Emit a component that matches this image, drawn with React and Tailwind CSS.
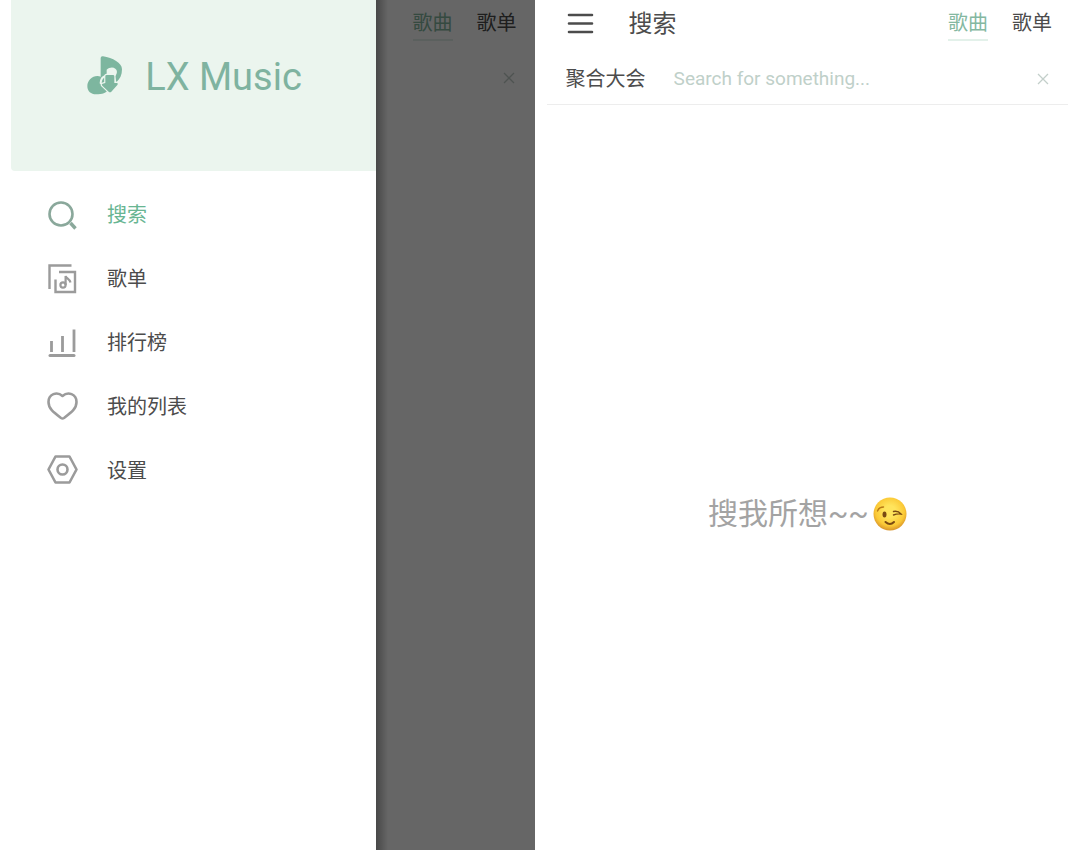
import React from 'react';

function SearchIcon() {
    return (
        <svg className="size-8" viewBox="0 0 32 32" fill="none" stroke="currentColor" strokeWidth="2.600">
            <circle cx="14" cy="15" r="11.500" />
            <path d="M23.500 24 28.500 29.500" strokeWidth="3.400" />
        </svg>
    );
}

function AlbumIcon() {
    return (
        <svg className="size-8" viewBox="0 0 32 32" fill="none" stroke="currentColor" strokeWidth="2.400">
            <path d="M2.500 26V2.500H24.500" />
            <path d="M12 9H28V29H8.500V16.500" />
            <circle cx="16" cy="22" r="2.600" strokeWidth="2.200" />
            <path d="M18.600 22V13C19.500 16 22.500 15.500 23.500 19.500" strokeWidth="2.200" />
        </svg>
    );
}

function RankIcon() {
    return (
        <svg className="size-8" viewBox="0 0 32 32" fill="none" stroke="currentColor" strokeWidth="3" strokeLinecap="round">
            <path d="M4.500 14V25M15.500 9V25M27 2.500V25" strokeLinecap="butt" strokeWidth="2.800" />
            <path d="M3 28.500H27" />
        </svg>
    );
}

function HeartIcon() {
    return (
        <svg className="size-8" viewBox="0 0 32 32" fill="none" stroke="currentColor" strokeWidth="2.600" strokeLinejoin="round">
            <path d="M15.500 5C10 0 1.500 3 1.500 11C1.500 17.500 6 21 14 27Q15.500 28 17 27C25 21 29.500 17.500 29.500 11C29.500 3 21 0 15.500 5Z" />
        </svg>
    );
}

function SettingIcon() {
    return (
        <svg className="size-8" viewBox="0 0 32 32" fill="none" stroke="currentColor" strokeWidth="2.600" strokeLinejoin="round">
            <path d="M8.500 1.500H22.500L29.500 14.500L22.500 27.500H8.500L1.500 14.500Z" />
            <circle cx="15.500" cy="14.500" r="5" />
        </svg>
    );
}

function Logo() {
    return (
        <svg className="h-[39px] w-9" viewBox="22 17 106 117">
            <path
                fill="#7db69f"
                d="M62 23Q62 17 69 18C98 23 126 37 126 57C126 74 120 86 109 96L105 78C112 70 113 60 106 55C98 49 87 52 80 58V80L72 106L84 118C80 127 67 132 48 132C33 132 22 123 22 107C22 91 36 77 52 77Q58 77 62 79Z"
            />
            {/* light gap that keeps the arrow apart from the note */}
            <path
                fill="none"
                stroke="#ebf5ee"
                strokeWidth="6"
                strokeLinecap="round"
                d="M77 77Q63 80 62 98"
            />
            <path
                fill="#7db69f"
                stroke="#ebf5ee"
                strokeWidth="7"
                strokeLinejoin="round"
                paintOrder="stroke"
                d="M80 74H99Q103 74 103 78V98H111Q116 99 112 104L94 124Q90 128 86 124L67 106Q63 101 68 100L76 98V78Q76 74 80 74Z"
            />
        </svg>
    );
}

function WinkFace() {
    return (
        <svg className="size-[34px]" viewBox="0 0 34 34" role="img" aria-label="wink">
            <defs>
                <radialGradient id="face" cx="50%" cy="42%" r="58%">
                    <stop offset="0.3" stopColor="#ffe45c" />
                    <stop offset="0.75" stopColor="#fbc936" />
                    <stop offset="1" stopColor="#d8942a" />
                </radialGradient>
            </defs>
            <circle cx="17" cy="17" r="16.500" fill="url(#face)" />
            <ellipse cx="11.500" cy="17.500" rx="2" ry="3" fill="#7a4a12" />
            <g fill="none" stroke="#7a4a12" strokeLinecap="round">
                <path d="M4.500 14Q6 10 10.500 10" stroke="#b97a17" strokeWidth="1.400" />
                <path d="M20.500 14.500Q25 13.500 28 17Q24 16.500 20.500 18" strokeWidth="1.400" />
                <path d="M12.500 25Q17 29 21 25" strokeWidth="2" />
            </g>
        </svg>
    );
}

const menus = [
    { name: '搜索', Icon: SearchIcon, active: true },
    { name: '歌单', Icon: AlbumIcon },
    { name: '排行榜', Icon: RankIcon },
    { name: '我的列表', Icon: HeartIcon },
    { name: '设置', Icon: SettingIcon },
];

function Tabs() {
    return (
        <nav className="flex gap-6 text-xl leading-8">
            <button type="button" className="border-b-2 border-[#e3f1ea] text-[#84b8a1]">歌曲</button>
            <button type="button" className="border-b-2 border-transparent">歌单</button>
        </nav>
    );
}

function ClearButton() {
    return (
        <button type="button" aria-label="clear" className="text-[#c3cfca]">
            <svg className="size-3" viewBox="0 0 12 12" fill="none" stroke="currentColor" strokeWidth="1.300">
                <path d="M1 1 11 11M11 1 1 11" />
            </svg>
        </button>
    );
}

function DrawerScreen() {
    return (
        <section className="flex pl-[11px]">
            <aside className="w-[365px] shrink-0 bg-white">
                <div className="flex h-[171px] items-start justify-center gap-[22px] rounded-bl-sm bg-[#ebf5ee] pt-[53px] pl-0.5">
                    <div className="pt-[3px]">
                        <Logo />
                    </div>
                    <h1 className="text-[38px] leading-12 text-[#7fb3a0]">LX Music</h1>
                </div>
                <ul className="pt-3">
                    {menus.map(({ name, Icon, active }) => (
                        <li key={name}>
                            <button type="button" className="flex h-16 w-full items-center gap-7 pl-9 text-xl">
                                <span className={active ? 'text-[#8aa89b]' : 'text-[#9b9b9b]'}>
                                    <Icon />
                                </span>
                                <span className={active ? 'text-[#68b592]' : ''}>{name}</span>
                            </button>
                        </li>
                    ))}
                </ul>
            </aside>
            <div className="relative flex-1 overflow-hidden bg-white">
                <header className="flex h-12 items-center justify-end pr-[18px]">
                    <Tabs />
                </header>
                <div className="mt-1 flex h-[52px] items-center justify-end pr-5">
                    <ClearButton />
                </div>
                <div className="absolute inset-0 bg-black/60" />
                <div className="absolute inset-y-0 left-0 w-3 bg-linear-to-r from-black/30 to-transparent" />
            </div>
        </section>
    );
}

function SearchScreen() {
    return (
        <section className="flex flex-col px-3">
            <header className="flex h-12 items-center pr-4 pl-[19px]">
                <button type="button" aria-label="menu">
                    <svg className="h-6 w-7" viewBox="0 0 28 24" stroke="currentColor" strokeWidth="2.600" strokeLinecap="round">
                        <path d="M3 3H26M3 11.500H26M3 20H26" />
                    </svg>
                </button>
                <h2 className="ml-[35px] flex-1 text-2xl">搜索</h2>
                <Tabs />
            </header>
            <div className="mt-1 flex h-[53px] items-center gap-7 border-b border-[#ededed] px-[19px] pt-0.5">
                <select aria-label="source" className="appearance-none text-xl">
                    <option>聚合大会</option>
                </select>
                <input
                    type="text"
                    aria-label="search"
                    placeholder="Search for something..."
                    className="min-w-0 flex-1 text-[19px] outline-none placeholder:text-[#bfd0c9]"
                />
                <ClearButton />
            </div>
            <div className="flex flex-1 items-center justify-center gap-1 pt-18 text-3xl text-[#a3a3a3]">
                <p>搜我所想~~</p>
                <WinkFace />
            </div>
        </section>
    );
}

export default function App() {
    return (
        <main className="grid min-h-screen grid-cols-[99fr_101fr] bg-white font-[Roboto,'Noto_Sans_CJK_SC',sans-serif] text-[#4c4c4c]">
            <DrawerScreen />
            <SearchScreen />
        </main>
    );
}
